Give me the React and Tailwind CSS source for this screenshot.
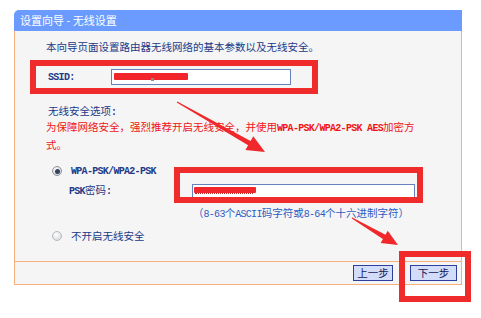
import React from "react";

const cjk = "font-['Noto_Sans_CJK_SC','Noto_Sans',sans-serif]";
const mono = "font-['Liberation_Mono',monospace] text-[10px] tracking-[-0.7px] font-bold";

function Radio({ checked }) {
  return checked ? (
    <div className="w-[10px] h-[10px] rounded-full border border-[#8e949c] bg-[radial-gradient(circle_at_40%_35%,#ffffff,#c4c8ce)] flex items-center justify-center">
      <div className="w-[5px] h-[5px] rounded-full bg-[#34425e]" />
    </div>
  ) : (
    <div className="w-[10px] h-[10px] rounded-full border border-[#b6bac2] bg-[radial-gradient(circle_at_40%_35%,#ffffff,#cfd2d6)]" />
  );
}

export default function App() {
  return (
    <div className={`relative w-[481px] h-[318px] bg-white overflow-hidden text-[10.5px] ${cjk}`}>
      <div className="ml-[14px] mt-[10px] w-[448px]">
        <div className="h-[21px] bg-[#6b9bff] rounded-tl-[5px] text-white text-[11px] leading-[21px] pl-[6px]">
          设置向导 - 无线设置
        </div>
        <div className="border-x border-b border-[#f6b07c] bg-[#f5f5f6]">
          <div className="h-[230px] flex flex-col text-[#213a86]">
            <div className="mt-[8px] ml-[31px] h-[16px] leading-[16px] whitespace-nowrap">
              本向导页面设置路由器无线网络的基本参数以及无线安全。
            </div>
            <div className="mt-[5px] ml-[15px] w-[288px] h-[34px] border-[6px] border-[#f02b2b] flex items-center">
              <span className={`ml-[12px] w-[63px] ${mono}`}>SSID:</span>
              <div className="relative w-[180px] h-[16px] border border-[#6781bd] bg-white">
                <div className="absolute left-[2px] top-[3px] w-[74px] h-[7px] bg-[#f2252b] rounded-[1px]" />
                <div className="absolute left-[39px] top-[8px] w-[3px] h-[3px] bg-[#8a8a8a]" />
              </div>
            </div>
            <div className="mt-[9px] ml-[33px] h-[16px] leading-[16px]">
              无线安全选项<span className={mono}>:</span>
            </div>
            <div className="ml-[31px] leading-[16px] text-[#f01414] whitespace-nowrap">
              <div>
                为保障网络安全，强烈推荐开启无线安全，并使用
                <span className={mono}>WPA-PSK/WPA2-PSK AES</span>
                加密方
              </div>
              <div>式。</div>
            </div>
            <div className="mt-[10px] ml-[37px] h-[16px] flex items-center gap-[9px]">
              <Radio checked />
              <span className={mono}>WPA-PSK/WPA2-PSK</span>
            </div>
            <div className="mt-[3px] ml-[54px] h-[18px] flex items-start">
              <span className="w-[123px] leading-[16px] whitespace-nowrap">
                <span className={mono}>PSK</span>密码<span className={mono}>:</span>
              </span>
              <div className="relative mt-[2px] w-[223px] h-[16px] border border-[#6781bd] bg-white">
                <div className="absolute left-[1px] top-[2px] w-[62px] h-[6px] bg-[#f2252b] rounded-[1px]" />
                <div className="absolute left-[2px] top-[8px] w-[58px] h-[1px] border-b border-dotted border-[#b03030]" />
              </div>
            </div>
            <div className="mt-[5px] ml-[178px] h-[16px] leading-[16px] text-[#2d5cc2] whitespace-nowrap">
              （<span className="font-['Liberation_Mono',monospace] text-[10px] tracking-[-0.7px]">8-63</span>个<span className="font-['Liberation_Mono',monospace] text-[10px] tracking-[-0.7px]">ASCII</span>码字符或<span className="font-['Liberation_Mono',monospace] text-[10px] tracking-[-0.7px]">8-64</span>个十六进制字符）
            </div>
            <div className="mt-[7px] ml-[37px] h-[16px] flex items-center gap-[9px]">
              <Radio />
              <span className="leading-[16px]">不开启无线安全</span>
            </div>
          </div>
          <div className="h-[23px] border-t border-[#f6b07c] flex items-center justify-end gap-[17px] pr-[4px]">
            <button className="w-[40px] h-[16px] border border-[#2b3f9e] bg-[#d3dcf8] text-[#14185a] text-[10.5px] leading-[14px]">
              上一步
            </button>
            <button className="w-[47px] h-[16px] border border-[#2b3f9e] bg-[#d3dcf8] text-[#14185a] text-[10.5px] leading-[14px]">
              下一步
            </button>
          </div>
        </div>
      </div>

      <div className="absolute left-[174px] top-[167px] w-[249px] h-[36px] border-[6px] border-[#f02b2b]" />
      <div className="absolute left-[399px] top-[251px] w-[72px] h-[51px] border-[6px] border-[#f02b2b]" />

      <svg className="absolute left-0 top-0" width="481" height="318" viewBox="0 0 481 318">
        <polygon
          fill="#f0282b"
          points="176.75,102.43 248.1,145.28 245.4,150.07 265,152 253.3,136.15 250.6,140.94 177.25,101.57"
        />
        <polygon
          fill="#f0282b"
          points="351.75,218.43 382.93,239.06 380.65,242.94 398,245 387.75,230.86 385.47,234.74 352.25,217.57"
        />
      </svg>
    </div>
  );
}
